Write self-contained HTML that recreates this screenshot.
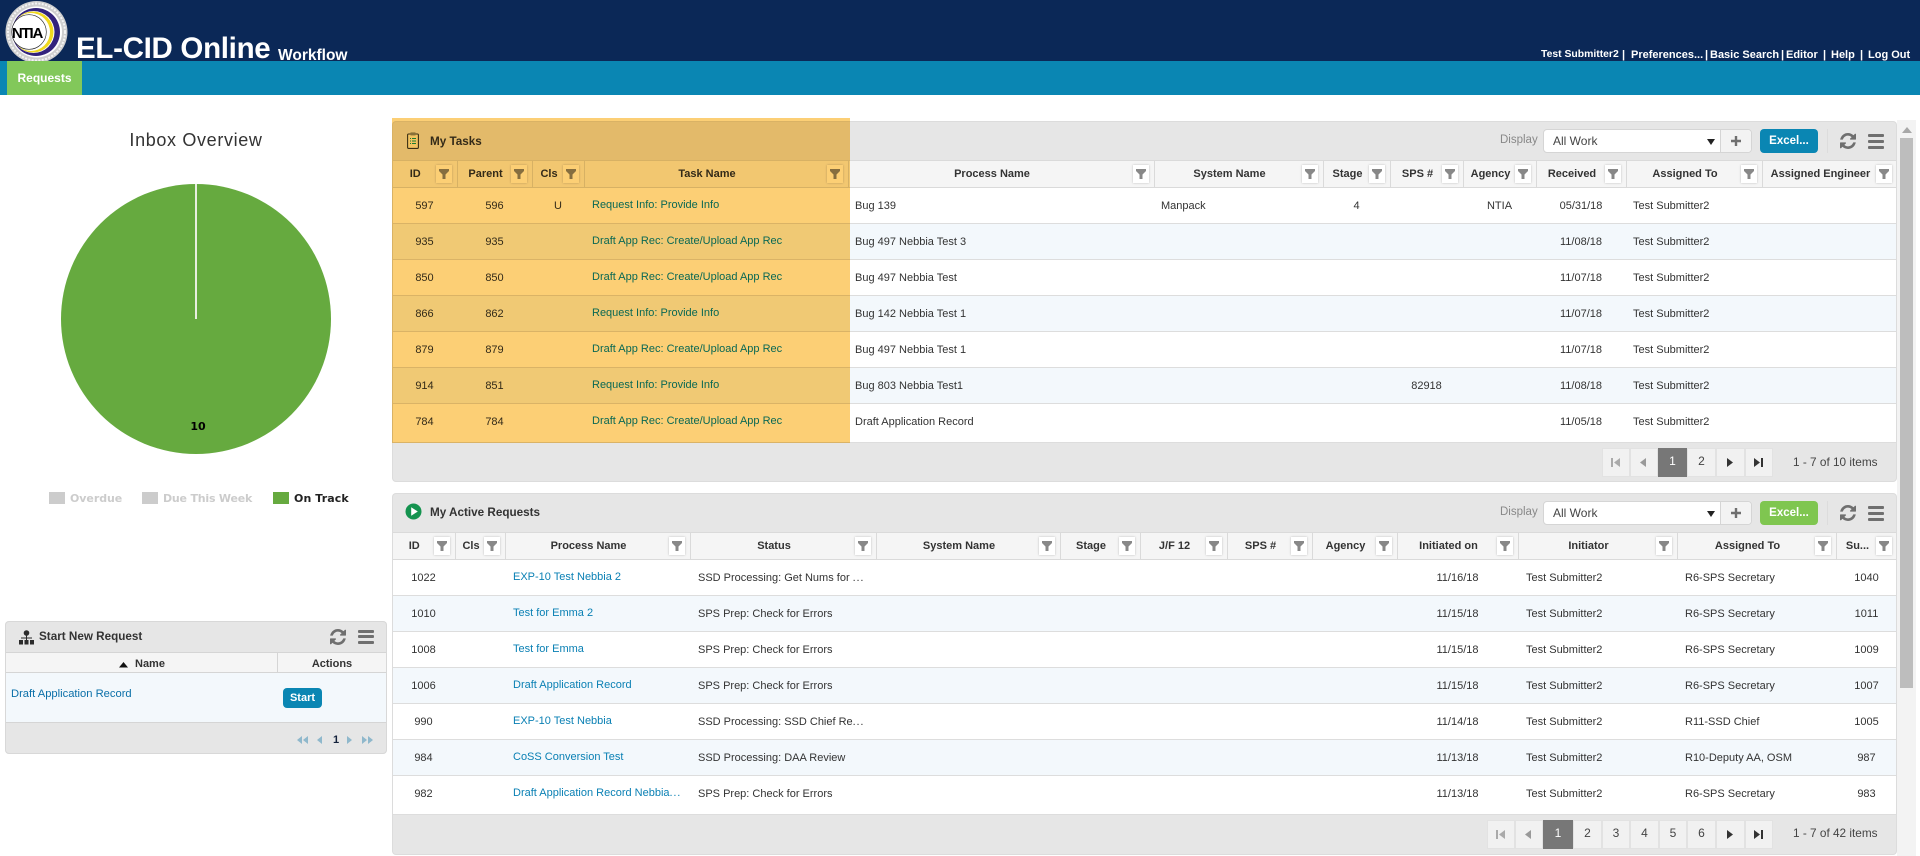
<!DOCTYPE html>
<html><head><meta charset="utf-8"><title>EL-CID Online Workflow</title>
<style>
html,body{margin:0;padding:0;background:#fff;width:1920px;height:856px;overflow:hidden}
body{position:relative;font-family:"Liberation Sans",Arial,sans-serif;font-size:11px;color:#333}
.a{position:absolute}
.hl{position:absolute;top:47px;color:#fff;font-weight:bold;font-size:11px;line-height:16px;white-space:nowrap}
.panel{position:absolute;left:392px;width:1505px;background:#e6e6e6;border-radius:4px;box-sizing:border-box;overflow:hidden}
.panel::after{content:"";position:absolute;left:0;top:0;right:0;bottom:0;border:1px solid #dcdcdc;border-radius:4px;pointer-events:none}
.ttl{position:absolute;left:38px;font-weight:bold;font-size:11.7px;color:#333;line-height:16px}
table{position:absolute;left:0;border-collapse:collapse;table-layout:fixed;background:#fff;font-size:11px}
th{height:27px;background:#f5f5f5;border-top:1px solid #dadada;border-bottom:1px solid #dadada;border-right:1px solid #dadada;box-sizing:border-box;padding:0 18px 1px 0;text-align:center;font-weight:bold;color:#333;position:relative;white-space:nowrap;overflow:hidden}
th i{position:absolute;right:5px;top:4px;width:16px;height:18px;background:#fff;box-shadow:0 0 2px #bbb;display:block}
th i svg{position:absolute;left:3px;top:4px}
td{height:36px;box-sizing:border-box;border-bottom:1px solid #ddd;padding:0 8px;white-space:nowrap;overflow:hidden;text-overflow:ellipsis;color:#333}
table.t1 td{padding:0 7px}
table.t1 td.c{padding:0}
table.t1 td:nth-child(4){padding:0 8px}
tr.alt td{background:#f3f8fc}
td.c{text-align:center;padding:0}
td a{color:#0a80b4;position:relative;top:-1px;text-decoration:none}
td u{text-decoration:none;letter-spacing:.8px}
.tb{position:absolute;top:8px;height:24px;left:1151px;width:209px;background:#fff;border:1px solid #d5d5d5;border-radius:4px;box-sizing:border-box;font-size:12px;line-height:23px;padding-left:9px;color:#444}
.plus{position:absolute;right:0;top:0;width:30px;height:22px;background:#f3f3f3;border-left:1px solid #d5d5d5;border-radius:0 4px 4px 0}
.plus svg{position:absolute;left:10px;top:6px}
.car{position:absolute;left:163px;top:9px;width:0;height:0;border-left:4px solid transparent;border-right:4px solid transparent;border-top:6px solid #222}
.disp{position:absolute;top:11px;left:1108px;color:#888;font-size:11.5px;line-height:16px}
.xl{position:absolute;top:8px;left:1368px;width:58px;height:24px;border-radius:4px;color:#fff;font-weight:bold;font-size:11.5px;line-height:24px;text-align:center}
.sep{position:absolute;top:8px;left:1435px;width:1px;height:24px;background:#dcdcdc}
.ham{position:absolute;width:16px;height:3px;background:#6f6f6f;border-radius:1px}
.pg{position:absolute;height:29px;background:#f1f1f1;box-shadow:inset 0 0 0 1px #e2e2e2;text-align:center;line-height:27px;font-size:12px;color:#444}
.pg.on{background:#777;color:#fff;box-shadow:none}
.pg svg{position:absolute;left:9px;top:10px}
.info{position:absolute;left:1401px;font-size:11.8px;line-height:16px;color:#444;white-space:nowrap}
.strip{position:absolute;left:1px;top:318px;width:1503px;height:3px;background:#fff;border-bottom:1px solid #ddd}
</style></head><body>

<div class="a" style="left:0;top:0;width:1920px;height:61px;background:#0b2857"></div>

<svg class="a" style="left:0;top:0" width="74" height="61" viewBox="0 0 74 61">
<circle cx="36.5" cy="32" r="31" fill="#cfcfcf"/>
<circle cx="36.5" cy="32" r="28.5" fill="none" stroke="#f4f4f4" stroke-width="2" stroke-dasharray="2 1.4"/>
<circle cx="36.5" cy="32" r="25.5" fill="#fff"/>
<circle cx="36" cy="32" r="24" fill="#33237c"/>
<circle cx="33.5" cy="32" r="21" fill="#fff"/>
<circle cx="33" cy="32" r="20.5" fill="#f0d81e"/>
<circle cx="31" cy="32" r="19" fill="#fff"/>
<circle cx="29" cy="32" r="17.3" fill="none" stroke="#222" stroke-width=".6"/>
<text x="27" y="38" text-anchor="middle" font-family="Liberation Sans,sans-serif" font-weight="bold" font-size="15" letter-spacing="-1.2" fill="#000">NTIA</text>
</svg>

<div class="a" style="left:76px;top:31px;font-size:29.5px;line-height:36px;font-weight:bold;color:#fff;white-space:nowrap;letter-spacing:-.3px;font-family:'Liberation Sans',sans-serif">EL-CID Online</div>
<div class="a" style="left:278px;top:47px;font-size:15.5px;line-height:18px;font-weight:bold;color:#fff;white-space:nowrap">Workflow</div>

<div class="hl" style="left:1541px;font-size:10.4px">Test Submitter2</div>
<div class="hl" style="left:1622px">|</div>
<div class="hl" style="left:1631px">Preferences...</div>
<div class="hl" style="left:1705px">|</div>
<div class="hl" style="left:1710px">Basic Search</div>
<div class="hl" style="left:1781px">|</div>
<div class="hl" style="left:1786px">Editor</div>
<div class="hl" style="left:1823px">|</div>
<div class="hl" style="left:1831px">Help</div>
<div class="hl" style="left:1860px">|</div>
<div class="hl" style="left:1868px">Log Out</div>

<div class="a" style="left:0;top:61px;width:1920px;height:34px;background:#0a86b3"></div>
<div class="a" style="left:7px;top:61px;width:75px;height:34px;background:#82c85a;color:#fff;font-weight:bold;font-size:12px;line-height:34px;text-align:center">Requests</div>

<!-- Inbox overview -->
<div class="a" style="left:96px;top:128px;width:200px;text-align:center;font-size:18px;line-height:24px;letter-spacing:.65px;color:#333">Inbox Overview</div>
<svg class="a" style="left:60px;top:183px" width="272" height="272">
<circle cx="136" cy="136" r="135" fill="#66aa3f"/>
<rect x="135" y="1" width="2" height="135" fill="#e8eee0"/>
<text x="138" y="247" text-anchor="middle" font-family="DejaVu Sans,sans-serif" font-size="11" font-weight="bold" fill="#000">10</text>
</svg>
<div class="a" style="left:49px;top:492px;width:16px;height:12px;background:#ccc"></div>
<div class="a" style="left:70px;top:491px;font:bold 11px/16px 'DejaVu Sans',sans-serif;color:#ccc;white-space:nowrap;letter-spacing:-.05px">Overdue</div>
<div class="a" style="left:142px;top:492px;width:16px;height:12px;background:#ccc"></div>
<div class="a" style="left:163px;top:491px;font:bold 11px/16px 'DejaVu Sans',sans-serif;color:#ccc;white-space:nowrap;letter-spacing:-.2px">Due This Week</div>
<div class="a" style="left:273px;top:492px;width:16px;height:12px;background:#66aa3f"></div>
<div class="a" style="left:294px;top:491px;font:bold 11px/16px 'DejaVu Sans',sans-serif;color:#222;white-space:nowrap;letter-spacing:.1px">On Track</div>

<!-- Start New Request -->
<div class="a" style="left:5px;top:621px;width:382px;height:133px;background:#e6e6e6;border-radius:4px;box-shadow:inset 0 0 0 1px #d8d8d8;overflow:hidden">
 <svg class="a" style="left:14px;top:9px" width="15" height="15" viewBox="0 0 15 15" fill="#2b2b2b"><circle cx="7.5" cy="3" r="2.8"/><rect x="7" y="5" width="1" height="5"/><rect x="2" y="7.5" width="11" height="1"/><rect x="0" y="10" width="4" height="4.5"/><rect x="5.5" y="10" width="4" height="4.5"/><rect x="11" y="10" width="4" height="4.5"/></svg>
 <div class="a" style="left:34px;top:8px;font-weight:bold;font-size:11.7px;line-height:16px;white-space:nowrap">Start New Request</div>
 <svg class="a" style="left:325px;top:8px" width="16" height="16" viewBox="0 0 1536 1536" fill="#6f6f6f"><path d="M1511 928q0 5-1 7-64 268-268 434.5t-478 166.5q-146 0-282.5-55t-243.5-157l-129 129q-19 19-45 19t-45-19-19-45v-448q0-26 19-45t45-19h448q26 0 45 19t19 45-19 45l-137 137q71 66 161 102t187 36q134 0 250-65t186-179q11-17 53-117 8-23 30-23h192q13 0 22.5 9.5t9.5 22.5zm25-800v448q0 26-19 45t-45 19h-448q-26 0-45-19t-19-45 19-45l138-138q-148-137-349-137-134 0-250 65t-186 179q-11 17-53 117-8 23-30 23h-199q-13 0-22.5-9.5t-9.5-22.5v-7q65-268 270-434.5t480-166.5q146 0 284 55.5t245 156.5l130-129q19-19 45-19t45 19 19 45z"/></svg>
 <div class="ham" style="left:353px;top:9px"></div><div class="ham" style="left:353px;top:14px"></div><div class="ham" style="left:353px;top:20px"></div>
 <div class="a" style="left:1px;top:31px;width:380px;height:21px;background:#f5f5f5;border-top:1px solid #d5d5d5;border-bottom:1px solid #d5d5d5;box-sizing:border-box"></div>
 <div class="a" style="left:272px;top:32px;width:1px;height:20px;background:#d5d5d5"></div>
 <svg class="a" style="left:114px;top:41px" width="9" height="6"><path d="M0 5.5L4.5 0 9 5.5z" fill="#111"/></svg>
 <div class="a" style="left:130px;top:35px;font-weight:bold;line-height:16px;font-size:11px">Name</div>
 <div class="a" style="left:273px;top:35px;width:108px;text-align:center;font-weight:bold;line-height:16px;font-size:11px">Actions</div>
 <div class="a" style="left:1px;top:52px;width:380px;height:50px;background:#f3f8fc;border-bottom:1px solid #d5d5d5;box-sizing:border-box"></div>
 <div class="a" style="left:6px;top:65px;color:#0a6fa8;line-height:16px;white-space:nowrap;font-size:11.2px">Draft Application Record</div>
 <div class="a" style="left:278px;top:67px;width:39px;height:20px;background:#0a86b3;border-radius:4px;color:#fff;font-weight:bold;line-height:21px;text-align:center;font-size:11px">Start</div>
 <svg class="a" style="left:292px;top:114px" width="80" height="10" fill="#8fb8cc">
  <path d="M5 1v8L0 5zM11 1v8L6 5zM25 1v8L20 5zM50 1v8l5-4zM65 1v8l5-4zM71 1v8l5-4z"/>
 </svg>
 <div class="a" style="left:328px;top:111px;font-weight:bold;color:#14223c;line-height:16px;font-size:11px">1</div>
</div>

<!-- My Tasks -->
<div class="panel" style="top:121px;height:361px">
 <svg class="a" style="left:15px;top:11px" width="12" height="17" viewBox="0 0 12 17" fill="none"><rect x=".6" y="2" width="10.8" height="14.4" rx="1" stroke="#3a3a2a" stroke-width="1.1" fill="#f6f2d4"/><rect x="3.5" y=".4" width="5" height="3" fill="#8a8a7a"/><path d="M3 6.5h1M5 6.5h4M3 9h1M5 9h4M3 11.5h1M5 11.5h4" stroke="#1c9a6a"/></svg>
 <div class="ttl" style="top:13px">My Tasks</div>
 <div class="disp">Display</div>
 <div class="tb">All Work<span class="car"></span><span class="plus"><svg width="10" height="10" fill="#6f6f6f"><path d="M3.8 0h2.4v3.8H10v2.4H6.2V10H3.8V6.2H0V3.8h3.8z"/></svg></span></div>
 <div class="xl" style="background:#0a86b3">Excel...</div>
 <div class="sep"></div>
 <svg class="a" style="left:1448px;top:12px" width="16" height="16" viewBox="0 0 1536 1536" fill="#6f6f6f"><path d="M1511 928q0 5-1 7-64 268-268 434.5t-478 166.5q-146 0-282.5-55t-243.5-157l-129 129q-19 19-45 19t-45-19-19-45v-448q0-26 19-45t45-19h448q26 0 45 19t19 45-19 45l-137 137q71 66 161 102t187 36q134 0 250-65t186-179q11-17 53-117 8-23 30-23h192q13 0 22.5 9.5t9.5 22.5zm25-800v448q0 26-19 45t-45 19h-448q-26 0-45-19t-19-45 19-45l138-138q-148-137-349-137-134 0-250 65t-186 179q-11 17-53 117-8 23-30 23h-199q-13 0-22.5-9.5t-9.5-22.5v-7q65-268 270-434.5t480-166.5q146 0 284 55.5t245 156.5l130-129q19-19 45-19t45 19 19 45z"/></svg>
 <div class="ham" style="left:1476px;top:13px"></div><div class="ham" style="left:1476px;top:19px"></div><div class="ham" style="left:1476px;top:25px"></div>

 <table class="t1" style="top:39px;width:1505px">
 <colgroup><col style="width:65px"><col style="width:75px"><col style="width:52px"><col style="width:264px"><col style="width:306px"><col style="width:169px"><col style="width:67px"><col style="width:73px"><col style="width:73px"><col style="width:90px"><col style="width:136px"><col style="width:135px"></colgroup>
 <tr><th>ID<i><svg width="10" height="10" viewBox="0 0 10 10"><path d="M0 0h10v2L6.5 5.5V10h-3V5.5L0 2z" fill="#888"/></svg></i></th><th>Parent<i><svg width="10" height="10" viewBox="0 0 10 10"><path d="M0 0h10v2L6.5 5.5V10h-3V5.5L0 2z" fill="#888"/></svg></i></th><th>Cls<i><svg width="10" height="10" viewBox="0 0 10 10"><path d="M0 0h10v2L6.5 5.5V10h-3V5.5L0 2z" fill="#888"/></svg></i></th><th>Task Name<i><svg width="10" height="10" viewBox="0 0 10 10"><path d="M0 0h10v2L6.5 5.5V10h-3V5.5L0 2z" fill="#888"/></svg></i></th><th>Process Name<i><svg width="10" height="10" viewBox="0 0 10 10"><path d="M0 0h10v2L6.5 5.5V10h-3V5.5L0 2z" fill="#888"/></svg></i></th><th>System Name<i><svg width="10" height="10" viewBox="0 0 10 10"><path d="M0 0h10v2L6.5 5.5V10h-3V5.5L0 2z" fill="#888"/></svg></i></th><th>Stage<i><svg width="10" height="10" viewBox="0 0 10 10"><path d="M0 0h10v2L6.5 5.5V10h-3V5.5L0 2z" fill="#888"/></svg></i></th><th>SPS #<i><svg width="10" height="10" viewBox="0 0 10 10"><path d="M0 0h10v2L6.5 5.5V10h-3V5.5L0 2z" fill="#888"/></svg></i></th><th>Agency<i><svg width="10" height="10" viewBox="0 0 10 10"><path d="M0 0h10v2L6.5 5.5V10h-3V5.5L0 2z" fill="#888"/></svg></i></th><th>Received<i><svg width="10" height="10" viewBox="0 0 10 10"><path d="M0 0h10v2L6.5 5.5V10h-3V5.5L0 2z" fill="#888"/></svg></i></th><th>Assigned To<i><svg width="10" height="10" viewBox="0 0 10 10"><path d="M0 0h10v2L6.5 5.5V10h-3V5.5L0 2z" fill="#888"/></svg></i></th><th>Assigned Engineer<i><svg width="10" height="10" viewBox="0 0 10 10"><path d="M0 0h10v2L6.5 5.5V10h-3V5.5L0 2z" fill="#888"/></svg></i></th></tr>
 <tr><td class="c">597</td><td class="c">596</td><td class="c">U</td><td><a>Request Info: Provide Info</a></td><td>Bug 139</td><td>Manpack</td><td class="c">4</td><td class="c"></td><td class="c">NTIA</td><td class="c">05/31/18</td><td>Test Submitter2</td><td></td></tr>
 <tr class="alt"><td class="c">935</td><td class="c">935</td><td class="c"></td><td><a>Draft App Rec: Create/Upload App Rec</a></td><td>Bug 497 Nebbia Test 3</td><td></td><td class="c"></td><td class="c"></td><td class="c"></td><td class="c">11/08/18</td><td>Test Submitter2</td><td></td></tr>
 <tr><td class="c">850</td><td class="c">850</td><td class="c"></td><td><a>Draft App Rec: Create/Upload App Rec</a></td><td>Bug 497 Nebbia Test</td><td></td><td class="c"></td><td class="c"></td><td class="c"></td><td class="c">11/07/18</td><td>Test Submitter2</td><td></td></tr>
 <tr class="alt"><td class="c">866</td><td class="c">862</td><td class="c"></td><td><a>Request Info: Provide Info</a></td><td>Bug 142 Nebbia Test 1</td><td></td><td class="c"></td><td class="c"></td><td class="c"></td><td class="c">11/07/18</td><td>Test Submitter2</td><td></td></tr>
 <tr><td class="c">879</td><td class="c">879</td><td class="c"></td><td><a>Draft App Rec: Create/Upload App Rec</a></td><td>Bug 497 Nebbia Test 1</td><td></td><td class="c"></td><td class="c"></td><td class="c"></td><td class="c">11/07/18</td><td>Test Submitter2</td><td></td></tr>
 <tr class="alt"><td class="c">914</td><td class="c">851</td><td class="c"></td><td><a>Request Info: Provide Info</a></td><td>Bug 803 Nebbia Test1</td><td></td><td class="c"></td><td class="c">82918</td><td class="c"></td><td class="c">11/08/18</td><td>Test Submitter2</td><td></td></tr>
 <tr><td class="c">784</td><td class="c">784</td><td class="c"></td><td><a>Draft App Rec: Create/Upload App Rec</a></td><td>Draft Application Record</td><td></td><td class="c"></td><td class="c"></td><td class="c"></td><td class="c">11/05/18</td><td>Test Submitter2</td><td></td></tr>
 </table>
 <div class="strip"></div>

 <div class="pg" style="left:1210px;top:327px;width:28px"><svg width="9" height="9"><path d="M0 0h2v9H0zM9 0v9L3 4.5z" fill="#aaa"/></svg></div>
 <div class="pg" style="left:1238px;top:327px;width:28px"><svg width="9" height="9"><path d="M7 0v9L1 4.5z" fill="#999"/></svg></div>
 <div class="pg on" style="left:1266px;top:327px;width:29px">1</div>
 <div class="pg" style="left:1295px;top:327px;width:29px">2</div>
 <div class="pg" style="left:1324px;top:327px;width:29px"><svg width="9" height="9"><path d="M2 0v9l6-4.5z" fill="#333"/></svg></div>
 <div class="pg" style="left:1353px;top:327px;width:28px"><svg width="9" height="9"><path d="M0 0v9l6-4.5zM7 0h2v9H7z" fill="#333"/></svg></div>
 <div class="info" style="top:333px">1 - 7 of 10 items</div>
</div>

<!-- My Active Requests -->
<div class="panel" style="top:493px;height:362px">
 <svg class="a" style="left:13px;top:10px" width="17" height="17" viewBox="0 0 17 17"><circle cx="8.5" cy="8.5" r="8" fill="#14934f"/><path d="M6.2 4.3v8.4l6.6-4.2z" fill="#fff"/></svg>
 <div class="ttl" style="top:12px">My Active Requests</div>
 <div class="disp">Display</div>
 <div class="tb">All Work<span class="car"></span><span class="plus"><svg width="10" height="10" fill="#6f6f6f"><path d="M3.8 0h2.4v3.8H10v2.4H6.2V10H3.8V6.2H0V3.8h3.8z"/></svg></span></div>
 <div class="xl" style="background:#7fc650">Excel...</div>
 <div class="sep"></div>
 <svg class="a" style="left:1448px;top:12px" width="16" height="16" viewBox="0 0 1536 1536" fill="#6f6f6f"><path d="M1511 928q0 5-1 7-64 268-268 434.5t-478 166.5q-146 0-282.5-55t-243.5-157l-129 129q-19 19-45 19t-45-19-19-45v-448q0-26 19-45t45-19h448q26 0 45 19t19 45-19 45l-137 137q71 66 161 102t187 36q134 0 250-65t186-179q11-17 53-117 8-23 30-23h192q13 0 22.5 9.5t9.5 22.5zm25-800v448q0 26-19 45t-45 19h-448q-26 0-45-19t-19-45 19-45l138-138q-148-137-349-137-134 0-250 65t-186 179q-11 17-53 117-8 23-30 23h-199q-13 0-22.5-9.5t-9.5-22.5v-7q65-268 270-434.5t480-166.5q146 0 284 55.5t245 156.5l130-129q19-19 45-19t45 19 19 45z"/></svg>
 <div class="ham" style="left:1476px;top:13px"></div><div class="ham" style="left:1476px;top:19px"></div><div class="ham" style="left:1476px;top:25px"></div>

 <table style="top:39px;width:1505px">
 <colgroup><col style="width:63px"><col style="width:50px"><col style="width:185px"><col style="width:186px"><col style="width:184px"><col style="width:80px"><col style="width:87px"><col style="width:85px"><col style="width:85px"><col style="width:121px"><col style="width:159px"><col style="width:159px"><col style="width:61px"></colgroup>
 <tr><th>ID<i><svg width="10" height="10" viewBox="0 0 10 10"><path d="M0 0h10v2L6.5 5.5V10h-3V5.5L0 2z" fill="#888"/></svg></i></th><th>Cls<i><svg width="10" height="10" viewBox="0 0 10 10"><path d="M0 0h10v2L6.5 5.5V10h-3V5.5L0 2z" fill="#888"/></svg></i></th><th>Process Name<i><svg width="10" height="10" viewBox="0 0 10 10"><path d="M0 0h10v2L6.5 5.5V10h-3V5.5L0 2z" fill="#888"/></svg></i></th><th>Status<i><svg width="10" height="10" viewBox="0 0 10 10"><path d="M0 0h10v2L6.5 5.5V10h-3V5.5L0 2z" fill="#888"/></svg></i></th><th>System Name<i><svg width="10" height="10" viewBox="0 0 10 10"><path d="M0 0h10v2L6.5 5.5V10h-3V5.5L0 2z" fill="#888"/></svg></i></th><th>Stage<i><svg width="10" height="10" viewBox="0 0 10 10"><path d="M0 0h10v2L6.5 5.5V10h-3V5.5L0 2z" fill="#888"/></svg></i></th><th>J/F 12<i><svg width="10" height="10" viewBox="0 0 10 10"><path d="M0 0h10v2L6.5 5.5V10h-3V5.5L0 2z" fill="#888"/></svg></i></th><th>SPS #<i><svg width="10" height="10" viewBox="0 0 10 10"><path d="M0 0h10v2L6.5 5.5V10h-3V5.5L0 2z" fill="#888"/></svg></i></th><th>Agency<i><svg width="10" height="10" viewBox="0 0 10 10"><path d="M0 0h10v2L6.5 5.5V10h-3V5.5L0 2z" fill="#888"/></svg></i></th><th>Initiated on<i><svg width="10" height="10" viewBox="0 0 10 10"><path d="M0 0h10v2L6.5 5.5V10h-3V5.5L0 2z" fill="#888"/></svg></i></th><th>Initiator<i><svg width="10" height="10" viewBox="0 0 10 10"><path d="M0 0h10v2L6.5 5.5V10h-3V5.5L0 2z" fill="#888"/></svg></i></th><th>Assigned To<i><svg width="10" height="10" viewBox="0 0 10 10"><path d="M0 0h10v2L6.5 5.5V10h-3V5.5L0 2z" fill="#888"/></svg></i></th><th>Su...<i><svg width="10" height="10" viewBox="0 0 10 10"><path d="M0 0h10v2L6.5 5.5V10h-3V5.5L0 2z" fill="#888"/></svg></i></th></tr>
 <tr><td class="c">1022</td><td></td><td><a>EXP-10 Test Nebbia 2</a></td><td>SSD Processing: Get Nums for <u>...</u></td><td></td><td></td><td></td><td></td><td></td><td class="c">11/16/18</td><td>Test Submitter2</td><td>R6-SPS Secretary</td><td class="c">1040</td></tr>
 <tr class="alt"><td class="c">1010</td><td></td><td><a>Test for Emma 2</a></td><td>SPS Prep: Check for Errors</td><td></td><td></td><td></td><td></td><td></td><td class="c">11/15/18</td><td>Test Submitter2</td><td>R6-SPS Secretary</td><td class="c">1011</td></tr>
 <tr><td class="c">1008</td><td></td><td><a>Test for Emma</a></td><td>SPS Prep: Check for Errors</td><td></td><td></td><td></td><td></td><td></td><td class="c">11/15/18</td><td>Test Submitter2</td><td>R6-SPS Secretary</td><td class="c">1009</td></tr>
 <tr class="alt"><td class="c">1006</td><td></td><td><a>Draft Application Record</a></td><td>SPS Prep: Check for Errors</td><td></td><td></td><td></td><td></td><td></td><td class="c">11/15/18</td><td>Test Submitter2</td><td>R6-SPS Secretary</td><td class="c">1007</td></tr>
 <tr><td class="c">990</td><td></td><td><a>EXP-10 Test Nebbia</a></td><td>SSD Processing: SSD Chief Re<u>...</u></td><td></td><td></td><td></td><td></td><td></td><td class="c">11/14/18</td><td>Test Submitter2</td><td>R11-SSD Chief</td><td class="c">1005</td></tr>
 <tr class="alt"><td class="c">984</td><td></td><td><a>CoSS Conversion Test</a></td><td>SSD Processing: DAA Review</td><td></td><td></td><td></td><td></td><td></td><td class="c">11/13/18</td><td>Test Submitter2</td><td>R10-Deputy AA, OSM</td><td class="c">987</td></tr>
 <tr><td class="c">982</td><td></td><td><a>Draft Application Record Nebbia<u>...</u></a></td><td>SPS Prep: Check for Errors</td><td></td><td></td><td></td><td></td><td></td><td class="c">11/13/18</td><td>Test Submitter2</td><td>R6-SPS Secretary</td><td class="c">983</td></tr>
 </table>
 <div class="strip"></div>

 <div class="pg" style="left:1095px;top:327px;width:28px"><svg width="9" height="9"><path d="M0 0h2v9H0zM9 0v9L3 4.5z" fill="#aaa"/></svg></div>
 <div class="pg" style="left:1123px;top:327px;width:28px"><svg width="9" height="9"><path d="M7 0v9L1 4.5z" fill="#999"/></svg></div>
 <div class="pg on" style="left:1151px;top:327px;width:30px">1</div>
 <div class="pg" style="left:1181px;top:327px;width:29px">2</div>
 <div class="pg" style="left:1210px;top:327px;width:28px">3</div>
 <div class="pg" style="left:1238px;top:327px;width:29px">4</div>
 <div class="pg" style="left:1267px;top:327px;width:28px">5</div>
 <div class="pg" style="left:1295px;top:327px;width:29px">6</div>
 <div class="pg" style="left:1324px;top:327px;width:29px"><svg width="9" height="9"><path d="M2 0v9l6-4.5z" fill="#333"/></svg></div>
 <div class="pg" style="left:1353px;top:327px;width:28px"><svg width="9" height="9"><path d="M0 0v9l6-4.5zM7 0h2v9H7z" fill="#333"/></svg></div>
 <div class="info" style="top:332px">1 - 7 of 42 items</div>
</div>

<!-- highlight overlay -->
<div class="a" style="left:392px;top:118px;width:458px;height:325px;background:#fccf75;mix-blend-mode:multiply"></div>

<!-- scrollbar -->
<div class="a" style="left:1897px;top:120px;width:19px;height:736px;background:#f3f3f3"></div>
<svg class="a" style="left:1902px;top:127px" width="10" height="6"><path d="M0 6L5 0l5 6z" fill="#a8a8a8"/></svg>
<div class="a" style="left:1900px;top:138px;width:13px;height:550px;background:#bdbdbd"></div>
</body></html>
